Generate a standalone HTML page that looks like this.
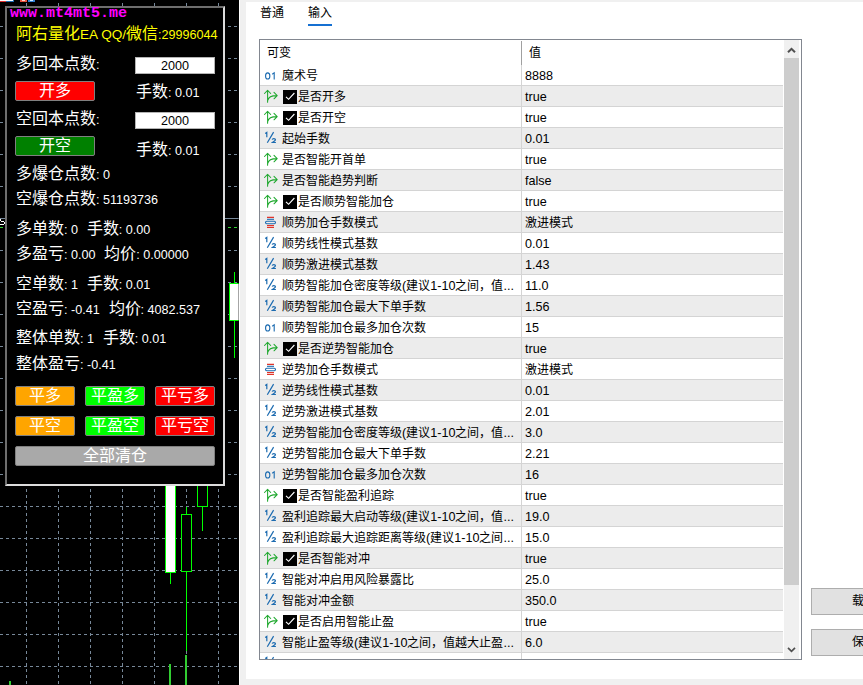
<!DOCTYPE html>
<html lang="zh-CN"><head><meta charset="utf-8"><title>EA</title>
<style>
html,body{margin:0;padding:0}
body{width:863px;height:685px;overflow:hidden;position:relative;background:#fff;font-family:"Liberation Sans",sans-serif;font-size:12px;color:#000}
.chart{position:absolute;left:0;top:0}
.gut{position:absolute;left:240px;top:0;width:6px;height:685px;background:#f0f0f0}
.foot{position:absolute;left:240px;top:679px;width:623px;height:6px;background:#f0f0f0}
.topl{position:absolute;left:240px;top:0;width:623px;height:2px;background:#f0f0f0}
.panel{position:absolute;left:5px;top:6px;width:216px;height:476px;background:#000;border:2px solid;border-color:#6e6e6e #dcdcdc #dcdcdc #6e6e6e}
.pw{position:absolute;left:0;top:0;width:239px;height:685px}
.url{position:absolute;left:10px;top:4px;font-family:"Liberation Mono",monospace;font-weight:bold;font-size:15px;color:#ff00ff;line-height:20px;white-space:pre}
.lb{position:absolute;font-weight:200;font-size:16px;line-height:20px;height:20px;white-space:pre}
.lb i{font-style:normal;font-size:12.6px}
.lb b{display:inline-block;width:1.8px}
.ed{position:absolute;left:135px;width:78px;height:15px;background:#fff;border:1px solid #b4b4b4;font-size:12.6px;line-height:16px;text-align:center;color:#000}
.bt{position:absolute;border-radius:2px;font-weight:200;box-sizing:border-box;border:1px solid #808080;color:#fff;font-size:16px;line-height:17px;text-align:center;white-space:nowrap}
.tab{position:absolute;top:4px;font-size:12px;line-height:18px}
.ul{position:absolute;left:308px;top:23.5px;width:24px;height:2px;background:#1570d2}
.tbl{position:absolute;left:259px;top:39px;width:541px;height:619px;border:1px solid #828790;background:#fff;overflow:hidden}
.hd{position:absolute;left:0;top:0;width:524px;height:25px;line-height:26px}
.hs{position:absolute;left:261px;top:1px;width:1px;height:24px;background:#a0a0a0}
.row{position:absolute;left:0;width:523px;height:20px;border-bottom:1px solid #d4d4d4;line-height:20px;white-space:nowrap}
.row.alt{background:#ececec}
.ic{position:absolute;left:0;top:0;width:16px;height:21px;overflow:visible}
.cb{position:absolute;left:23px;top:4px;width:14px;height:14px}
.nm{position:absolute;left:22px;top:1px;line-height:21px}
.nm i,.vl i{font-style:normal;font-size:12.6px}
.nm.ck{left:37.5px}
.vl{position:absolute;left:265px;top:1px;line-height:21px}
.cs{position:absolute;left:261px;top:1px;width:1px;height:620px;background:#d4d4d4}
.sb{position:absolute;left:524px;top:0;width:17px;height:619px;background:#fff}
.sbt{position:absolute;left:0;top:0;width:15px;height:619px;background:#f0f0f0}
.sbth{position:absolute;left:0;top:18px;width:15px;height:527px;background:#cdcdcd}
.pb{position:absolute;left:811px;width:110px;height:27px;box-sizing:border-box;background:#e1e1e1;border:1px solid #adadad;line-height:25px;padding-left:40px}
</style></head><body>
<svg class="chart" width="239" height="685" viewBox="0 0 239 685" shape-rendering="crispEdges">
<rect width="239" height="685" fill="#000"/>
<g stroke="#778899" stroke-width="1" stroke-dasharray="3 3"><line x1="26.5" y1="3" x2="26.5" y2="685"/><line x1="58.5" y1="3" x2="58.5" y2="685"/><line x1="90.5" y1="3" x2="90.5" y2="685"/><line x1="122.5" y1="3" x2="122.5" y2="685"/><line x1="154.5" y1="3" x2="154.5" y2="685"/><line x1="186.5" y1="3" x2="186.5" y2="685"/><line x1="218.5" y1="3" x2="218.5" y2="685"/></g>
<g stroke="#778899" stroke-width="1" stroke-dasharray="3 3"><line x1="0" y1="26.5" x2="239" y2="26.5"/><line x1="0" y1="58.5" x2="239" y2="58.5"/><line x1="0" y1="90.5" x2="239" y2="90.5"/><line x1="0" y1="122.5" x2="239" y2="122.5"/><line x1="0" y1="154.5" x2="239" y2="154.5"/><line x1="0" y1="186.5" x2="239" y2="186.5"/><line x1="0" y1="250.5" x2="239" y2="250.5"/><line x1="0" y1="282.5" x2="239" y2="282.5"/><line x1="0" y1="314.5" x2="239" y2="314.5"/><line x1="0" y1="346.5" x2="239" y2="346.5"/><line x1="0" y1="378.5" x2="239" y2="378.5"/><line x1="0" y1="410.5" x2="239" y2="410.5"/><line x1="0" y1="442.5" x2="239" y2="442.5"/><line x1="0" y1="474.5" x2="239" y2="474.5"/><line x1="0" y1="506.5" x2="239" y2="506.5"/><line x1="0" y1="538.5" x2="239" y2="538.5"/><line x1="0" y1="570.5" x2="239" y2="570.5"/><line x1="0" y1="602.5" x2="239" y2="602.5"/><line x1="0" y1="634.5" x2="239" y2="634.5"/><line x1="0" y1="666.5" x2="239" y2="666.5"/></g>
<line x1="0" y1="218.5" x2="239" y2="218.5" stroke="#778899"/>
<line x1="0" y1="227.5" x2="239" y2="227.5" stroke="#32cd32" stroke-dasharray="3 3"/>
<g fill="#fff"><rect x="0" y="219" width="1" height="2"/><rect x="1" y="221" width="3" height="1"/><rect x="4" y="222" width="1" height="2"/><rect x="0" y="224" width="4" height="1"/></g>
<g stroke="#00ff00" stroke-width="1" fill="none">
<line x1="170.5" y1="400" x2="170.5" y2="584"/>
<rect x="165.5" y="400" width="10" height="172" fill="#fff"/>
<line x1="186.5" y1="507" x2="186.5" y2="651"/>
<rect x="181.5" y="514.5" width="10" height="57" fill="#000"/>
<line x1="202.5" y1="400" x2="202.5" y2="531"/>
<rect x="197.5" y="400" width="10" height="106.5" fill="#000"/>
<line x1="234.5" y1="272" x2="234.5" y2="358"/>
<rect x="229.5" y="283.5" width="10" height="37" fill="#fff"/>
</g>
<g fill="#32cd32"><rect x="9" y="681" width="2" height="4"/><rect x="169" y="664" width="2" height="21"/><rect x="185" y="655" width="2" height="30"/></g>
<rect x="238" y="0" width="1" height="685" fill="#000" fill-opacity="0.35"/>
<rect x="0" y="0" width="13" height="1" fill="#fff"/><rect x="13" y="0" width="1" height="2" fill="#1c6bb0"/><rect x="0" y="1" width="6" height="1" fill="#e03030"/><rect x="6" y="1" width="8" height="1" fill="#1c6bb0"/>
<rect x="20" y="0" width="7" height="2" fill="#e8503c"/><rect x="22" y="0" width="3" height="1" fill="#ffd8d0"/><rect x="28" y="0" width="7" height="2" fill="#2f7fd0"/><rect x="30" y="0" width="3" height="1" fill="#d0e8ff"/>
</svg>
<div class="gut"></div>
<div class="foot"></div>
<div class="topl"></div>
<div class="pw">
<div class="panel"></div>
<div class="url">www.mt4mt5.me</div>
<div class="lb" style="left:16px;top:24.2px;color:#ffff00">阿右量化<i style="font-size:13.6px">EA QQ/</i>微信<i>:29996044</i></div>
<div class="lb" style="left:16px;top:53.7px;color:#fff">多回本点数<i>:</i></div>
<div class="lb" style="left:136px;top:82.0px;color:#fff">手数<i>: 0.01</i></div>
<div class="lb" style="left:16px;top:108.5px;color:#fff">空回本点数<i>:</i></div>
<div class="lb" style="left:136px;top:139.6px;color:#fff">手数<i>: 0.01</i></div>
<div class="lb" style="left:16px;top:163.7px;color:#fff">多爆仓点数<i>: 0</i></div>
<div class="lb" style="left:16px;top:188.9px;color:#fff">空爆仓点数<i>: 51193736</i></div>
<div class="lb" style="left:16px;top:218.7px;color:#fff">多单数<i>: 0 <b></b> </i>手数<i>: 0.00</i></div>
<div class="lb" style="left:16px;top:244.3px;color:#fff">多盈亏<i>: 0.00 <b></b> </i>均价<i>: 0.00000</i></div>
<div class="lb" style="left:16px;top:273.9px;color:#fff">空单数<i>: 1 <b></b> </i>手数<i>: 0.01</i></div>
<div class="lb" style="left:16px;top:298.8px;color:#fff">空盈亏<i>: -0.41 <b></b> </i>均价<i>: 4082.537</i></div>
<div class="lb" style="left:16px;top:328.4px;color:#fff">整体单数<i>: 1 <b></b> </i>手数<i>: 0.01</i></div>
<div class="lb" style="left:16px;top:353.6px;color:#fff">整体盈亏<i>: -0.41</i></div>
<div class="ed" style="top:57px">2000</div>
<div class="ed" style="top:112px">2000</div>
<div class="bt" style="left:15px;top:81px;width:80px;height:20px;background:#ff0000">开多</div>
<div class="bt" style="left:15px;top:136px;width:80px;height:20px;background:#008000">开空</div>
<div class="bt" style="left:15px;top:386px;width:60px;height:20px;background:#ffa500">平多</div>
<div class="bt" style="left:85px;top:386px;width:60px;height:20px;background:#00ff00">平盈多</div>
<div class="bt" style="left:155px;top:386px;width:60px;height:20px;background:#ff0000">平亏多</div>
<div class="bt" style="left:15px;top:416px;width:60px;height:20px;background:#ffa500">平空</div>
<div class="bt" style="left:85px;top:416px;width:60px;height:20px;background:#00ff00">平盈空</div>
<div class="bt" style="left:155px;top:416px;width:60px;height:20px;background:#ff0000">平亏空</div>
<div class="bt" style="left:15px;top:446px;width:200px;height:20px;background:#a9a9a9">全部清仓</div>
</div>
<div class="tab" style="left:260px">普通</div>
<div class="tab" style="left:308px">输入</div>
<div class="ul"></div>
<div class="tbl">
<div class="hd"><span style="position:absolute;left:6.5px">可变</span><span style="position:absolute;left:268.5px">值</span></div>
<div class="row" style="top:25.0px"><svg class="ic" viewBox="0 0 16 21"><ellipse cx="7.7" cy="10.9" rx="2.15" ry="3.05" fill="none" stroke="#1c6bb0" stroke-width="1.1"/><path d="M12.2 9.2 L14.2 7.8 V14.4" fill="none" stroke="#1c6bb0" stroke-width="1.1"/></svg><span class="nm">魔术号</span><span class="vl"><i>8888</i></span></div>
<div class="row alt" style="top:46.0px"><svg class="ic" viewBox="0 0 16 21"><path d="M7.6 16.3 V4.7 M4.5 7.5 L7.6 4.4 L10.7 7.5 M7.8 14.4 C8.3 11.4 11 9.6 16.8 9.6 M14 6.4 L17.2 9.6 L14 12.8" fill="none" stroke="#1fa82e" stroke-width="1.05" stroke-linecap="round" stroke-linejoin="round"/></svg><svg class="cb" viewBox="0 0 14 14"><rect width="14" height="14" fill="#000"/><path d="M3 6.8 L5.6 9.3 L11.4 3" fill="none" stroke="#fff" stroke-width="1.15"/></svg><span class="nm ck">是否开多</span><span class="vl"><i>true</i></span></div>
<div class="row" style="top:67.0px"><svg class="ic" viewBox="0 0 16 21"><path d="M7.6 16.3 V4.7 M4.5 7.5 L7.6 4.4 L10.7 7.5 M7.8 14.4 C8.3 11.4 11 9.6 16.8 9.6 M14 6.4 L17.2 9.6 L14 12.8" fill="none" stroke="#1fa82e" stroke-width="1.05" stroke-linecap="round" stroke-linejoin="round"/></svg><svg class="cb" viewBox="0 0 14 14"><rect width="14" height="14" fill="#000"/><path d="M3 6.8 L5.6 9.3 L11.4 3" fill="none" stroke="#fff" stroke-width="1.15"/></svg><span class="nm ck">是否开空</span><span class="vl"><i>true</i></span></div>
<div class="row alt" style="top:88.0px"><svg class="ic" viewBox="0 0 16 21"><path d="M5.2 5.5 L6.8 4.4 V9.2 M7.3 14.8 L13.6 4.1 M12.2 11.7 C12.5 10.3 15.5 10.3 15.4 11.9 C15.3 13 13.2 13.5 12.3 14.5 H15.9" fill="none" stroke="#1c6bb0" stroke-width="1.2"/></svg><span class="nm">起始手数</span><span class="vl"><i>0.01</i></span></div>
<div class="row" style="top:109.0px"><svg class="ic" viewBox="0 0 16 21"><path d="M7.6 16.3 V4.7 M4.5 7.5 L7.6 4.4 L10.7 7.5 M7.8 14.4 C8.3 11.4 11 9.6 16.8 9.6 M14 6.4 L17.2 9.6 L14 12.8" fill="none" stroke="#1fa82e" stroke-width="1.05" stroke-linecap="round" stroke-linejoin="round"/></svg><span class="nm">是否智能开首单</span><span class="vl"><i>true</i></span></div>
<div class="row alt" style="top:130.0px"><svg class="ic" viewBox="0 0 16 21"><path d="M7.6 16.3 V4.7 M4.5 7.5 L7.6 4.4 L10.7 7.5 M7.8 14.4 C8.3 11.4 11 9.6 16.8 9.6 M14 6.4 L17.2 9.6 L14 12.8" fill="none" stroke="#1fa82e" stroke-width="1.05" stroke-linecap="round" stroke-linejoin="round"/></svg><span class="nm">是否智能趋势判断</span><span class="vl"><i>false</i></span></div>
<div class="row" style="top:151.0px"><svg class="ic" viewBox="0 0 16 21"><path d="M7.6 16.3 V4.7 M4.5 7.5 L7.6 4.4 L10.7 7.5 M7.8 14.4 C8.3 11.4 11 9.6 16.8 9.6 M14 6.4 L17.2 9.6 L14 12.8" fill="none" stroke="#1fa82e" stroke-width="1.05" stroke-linecap="round" stroke-linejoin="round"/></svg><svg class="cb" viewBox="0 0 14 14"><rect width="14" height="14" fill="#000"/><path d="M3 6.8 L5.6 9.3 L11.4 3" fill="none" stroke="#fff" stroke-width="1.15"/></svg><span class="nm ck">是否顺势智能加仓</span><span class="vl"><i>true</i></span></div>
<div class="row alt" style="top:172.0px"><svg class="ic" viewBox="0 0 16 21"><path d="M7 5.4 H14 M7 13.6 H14 M7 15.5 H14" stroke="#e0352b" stroke-width="1.1" fill="none"/><path d="M7 7.3 H14" stroke="#1c6bb0" stroke-width="1.1" fill="none"/><rect x="5.5" y="9.2" width="10" height="2.5" rx="1.25" fill="none" stroke="#1c6bb0" stroke-width="1.1"/></svg><span class="nm">顺势加仓手数模式</span><span class="vl">激进模式</span></div>
<div class="row" style="top:193.0px"><svg class="ic" viewBox="0 0 16 21"><path d="M5.2 5.5 L6.8 4.4 V9.2 M7.3 14.8 L13.6 4.1 M12.2 11.7 C12.5 10.3 15.5 10.3 15.4 11.9 C15.3 13 13.2 13.5 12.3 14.5 H15.9" fill="none" stroke="#1c6bb0" stroke-width="1.2"/></svg><span class="nm">顺势线性模式基数</span><span class="vl"><i>0.01</i></span></div>
<div class="row alt" style="top:214.0px"><svg class="ic" viewBox="0 0 16 21"><path d="M5.2 5.5 L6.8 4.4 V9.2 M7.3 14.8 L13.6 4.1 M12.2 11.7 C12.5 10.3 15.5 10.3 15.4 11.9 C15.3 13 13.2 13.5 12.3 14.5 H15.9" fill="none" stroke="#1c6bb0" stroke-width="1.2"/></svg><span class="nm">顺势激进模式基数</span><span class="vl"><i>1.43</i></span></div>
<div class="row" style="top:235.0px"><svg class="ic" viewBox="0 0 16 21"><path d="M5.2 5.5 L6.8 4.4 V9.2 M7.3 14.8 L13.6 4.1 M12.2 11.7 C12.5 10.3 15.5 10.3 15.4 11.9 C15.3 13 13.2 13.5 12.3 14.5 H15.9" fill="none" stroke="#1c6bb0" stroke-width="1.2"/></svg><span class="nm">顺势智能加仓密度等级<i>(</i>建议<i>1-10</i>之间，值<i>...</i></span><span class="vl"><i>11.0</i></span></div>
<div class="row alt" style="top:256.0px"><svg class="ic" viewBox="0 0 16 21"><path d="M5.2 5.5 L6.8 4.4 V9.2 M7.3 14.8 L13.6 4.1 M12.2 11.7 C12.5 10.3 15.5 10.3 15.4 11.9 C15.3 13 13.2 13.5 12.3 14.5 H15.9" fill="none" stroke="#1c6bb0" stroke-width="1.2"/></svg><span class="nm">顺势智能加仓最大下单手数</span><span class="vl"><i>1.56</i></span></div>
<div class="row" style="top:277.0px"><svg class="ic" viewBox="0 0 16 21"><ellipse cx="7.7" cy="10.9" rx="2.15" ry="3.05" fill="none" stroke="#1c6bb0" stroke-width="1.1"/><path d="M12.2 9.2 L14.2 7.8 V14.4" fill="none" stroke="#1c6bb0" stroke-width="1.1"/></svg><span class="nm">顺势智能加仓最多加仓次数</span><span class="vl"><i>15</i></span></div>
<div class="row alt" style="top:298.0px"><svg class="ic" viewBox="0 0 16 21"><path d="M7.6 16.3 V4.7 M4.5 7.5 L7.6 4.4 L10.7 7.5 M7.8 14.4 C8.3 11.4 11 9.6 16.8 9.6 M14 6.4 L17.2 9.6 L14 12.8" fill="none" stroke="#1fa82e" stroke-width="1.05" stroke-linecap="round" stroke-linejoin="round"/></svg><svg class="cb" viewBox="0 0 14 14"><rect width="14" height="14" fill="#000"/><path d="M3 6.8 L5.6 9.3 L11.4 3" fill="none" stroke="#fff" stroke-width="1.15"/></svg><span class="nm ck">是否逆势智能加仓</span><span class="vl"><i>true</i></span></div>
<div class="row" style="top:319.0px"><svg class="ic" viewBox="0 0 16 21"><path d="M7 5.4 H14 M7 13.6 H14 M7 15.5 H14" stroke="#e0352b" stroke-width="1.1" fill="none"/><path d="M7 7.3 H14" stroke="#1c6bb0" stroke-width="1.1" fill="none"/><rect x="5.5" y="9.2" width="10" height="2.5" rx="1.25" fill="none" stroke="#1c6bb0" stroke-width="1.1"/></svg><span class="nm">逆势加仓手数模式</span><span class="vl">激进模式</span></div>
<div class="row alt" style="top:340.0px"><svg class="ic" viewBox="0 0 16 21"><path d="M5.2 5.5 L6.8 4.4 V9.2 M7.3 14.8 L13.6 4.1 M12.2 11.7 C12.5 10.3 15.5 10.3 15.4 11.9 C15.3 13 13.2 13.5 12.3 14.5 H15.9" fill="none" stroke="#1c6bb0" stroke-width="1.2"/></svg><span class="nm">逆势线性模式基数</span><span class="vl"><i>0.01</i></span></div>
<div class="row" style="top:361.0px"><svg class="ic" viewBox="0 0 16 21"><path d="M5.2 5.5 L6.8 4.4 V9.2 M7.3 14.8 L13.6 4.1 M12.2 11.7 C12.5 10.3 15.5 10.3 15.4 11.9 C15.3 13 13.2 13.5 12.3 14.5 H15.9" fill="none" stroke="#1c6bb0" stroke-width="1.2"/></svg><span class="nm">逆势激进模式基数</span><span class="vl"><i>2.01</i></span></div>
<div class="row alt" style="top:382.0px"><svg class="ic" viewBox="0 0 16 21"><path d="M5.2 5.5 L6.8 4.4 V9.2 M7.3 14.8 L13.6 4.1 M12.2 11.7 C12.5 10.3 15.5 10.3 15.4 11.9 C15.3 13 13.2 13.5 12.3 14.5 H15.9" fill="none" stroke="#1c6bb0" stroke-width="1.2"/></svg><span class="nm">逆势智能加仓密度等级<i>(</i>建议<i>1-10</i>之间，值<i>...</i></span><span class="vl"><i>3.0</i></span></div>
<div class="row" style="top:403.0px"><svg class="ic" viewBox="0 0 16 21"><path d="M5.2 5.5 L6.8 4.4 V9.2 M7.3 14.8 L13.6 4.1 M12.2 11.7 C12.5 10.3 15.5 10.3 15.4 11.9 C15.3 13 13.2 13.5 12.3 14.5 H15.9" fill="none" stroke="#1c6bb0" stroke-width="1.2"/></svg><span class="nm">逆势智能加仓最大下单手数</span><span class="vl"><i>2.21</i></span></div>
<div class="row alt" style="top:424.0px"><svg class="ic" viewBox="0 0 16 21"><ellipse cx="7.7" cy="10.9" rx="2.15" ry="3.05" fill="none" stroke="#1c6bb0" stroke-width="1.1"/><path d="M12.2 9.2 L14.2 7.8 V14.4" fill="none" stroke="#1c6bb0" stroke-width="1.1"/></svg><span class="nm">逆势智能加仓最多加仓次数</span><span class="vl"><i>16</i></span></div>
<div class="row" style="top:445.0px"><svg class="ic" viewBox="0 0 16 21"><path d="M7.6 16.3 V4.7 M4.5 7.5 L7.6 4.4 L10.7 7.5 M7.8 14.4 C8.3 11.4 11 9.6 16.8 9.6 M14 6.4 L17.2 9.6 L14 12.8" fill="none" stroke="#1fa82e" stroke-width="1.05" stroke-linecap="round" stroke-linejoin="round"/></svg><svg class="cb" viewBox="0 0 14 14"><rect width="14" height="14" fill="#000"/><path d="M3 6.8 L5.6 9.3 L11.4 3" fill="none" stroke="#fff" stroke-width="1.15"/></svg><span class="nm ck">是否智能盈利追踪</span><span class="vl"><i>true</i></span></div>
<div class="row alt" style="top:466.0px"><svg class="ic" viewBox="0 0 16 21"><path d="M5.2 5.5 L6.8 4.4 V9.2 M7.3 14.8 L13.6 4.1 M12.2 11.7 C12.5 10.3 15.5 10.3 15.4 11.9 C15.3 13 13.2 13.5 12.3 14.5 H15.9" fill="none" stroke="#1c6bb0" stroke-width="1.2"/></svg><span class="nm">盈利追踪最大启动等级<i>(</i>建议<i>1-10</i>之间，值<i>...</i></span><span class="vl"><i>19.0</i></span></div>
<div class="row" style="top:487.0px"><svg class="ic" viewBox="0 0 16 21"><path d="M5.2 5.5 L6.8 4.4 V9.2 M7.3 14.8 L13.6 4.1 M12.2 11.7 C12.5 10.3 15.5 10.3 15.4 11.9 C15.3 13 13.2 13.5 12.3 14.5 H15.9" fill="none" stroke="#1c6bb0" stroke-width="1.2"/></svg><span class="nm">盈利追踪最大追踪距离等级<i>(</i>建议<i>1-10</i>之间<i>...</i></span><span class="vl"><i>15.0</i></span></div>
<div class="row alt" style="top:508.0px"><svg class="ic" viewBox="0 0 16 21"><path d="M7.6 16.3 V4.7 M4.5 7.5 L7.6 4.4 L10.7 7.5 M7.8 14.4 C8.3 11.4 11 9.6 16.8 9.6 M14 6.4 L17.2 9.6 L14 12.8" fill="none" stroke="#1fa82e" stroke-width="1.05" stroke-linecap="round" stroke-linejoin="round"/></svg><svg class="cb" viewBox="0 0 14 14"><rect width="14" height="14" fill="#000"/><path d="M3 6.8 L5.6 9.3 L11.4 3" fill="none" stroke="#fff" stroke-width="1.15"/></svg><span class="nm ck">是否智能对冲</span><span class="vl"><i>true</i></span></div>
<div class="row" style="top:529.0px"><svg class="ic" viewBox="0 0 16 21"><path d="M5.2 5.5 L6.8 4.4 V9.2 M7.3 14.8 L13.6 4.1 M12.2 11.7 C12.5 10.3 15.5 10.3 15.4 11.9 C15.3 13 13.2 13.5 12.3 14.5 H15.9" fill="none" stroke="#1c6bb0" stroke-width="1.2"/></svg><span class="nm">智能对冲启用风险暴露比</span><span class="vl"><i>25.0</i></span></div>
<div class="row alt" style="top:550.0px"><svg class="ic" viewBox="0 0 16 21"><path d="M5.2 5.5 L6.8 4.4 V9.2 M7.3 14.8 L13.6 4.1 M12.2 11.7 C12.5 10.3 15.5 10.3 15.4 11.9 C15.3 13 13.2 13.5 12.3 14.5 H15.9" fill="none" stroke="#1c6bb0" stroke-width="1.2"/></svg><span class="nm">智能对冲金额</span><span class="vl"><i>350.0</i></span></div>
<div class="row" style="top:571.0px"><svg class="ic" viewBox="0 0 16 21"><path d="M7.6 16.3 V4.7 M4.5 7.5 L7.6 4.4 L10.7 7.5 M7.8 14.4 C8.3 11.4 11 9.6 16.8 9.6 M14 6.4 L17.2 9.6 L14 12.8" fill="none" stroke="#1fa82e" stroke-width="1.05" stroke-linecap="round" stroke-linejoin="round"/></svg><svg class="cb" viewBox="0 0 14 14"><rect width="14" height="14" fill="#000"/><path d="M3 6.8 L5.6 9.3 L11.4 3" fill="none" stroke="#fff" stroke-width="1.15"/></svg><span class="nm ck">是否启用智能止盈</span><span class="vl"><i>true</i></span></div>
<div class="row alt" style="top:592.0px"><svg class="ic" viewBox="0 0 16 21"><path d="M5.2 5.5 L6.8 4.4 V9.2 M7.3 14.8 L13.6 4.1 M12.2 11.7 C12.5 10.3 15.5 10.3 15.4 11.9 C15.3 13 13.2 13.5 12.3 14.5 H15.9" fill="none" stroke="#1c6bb0" stroke-width="1.2"/></svg><span class="nm">智能止盈等级<i>(</i>建议<i>1-10</i>之间，值越大止盈<i>...</i></span><span class="vl"><i>6.0</i></span></div>
<div class="row" style="top:613.0px"><svg class="ic" viewBox="0 0 16 21"><path d="M5.2 5.5 L6.8 4.4 V9.2 M7.3 14.8 L13.6 4.1 M12.2 11.7 C12.5 10.3 15.5 10.3 15.4 11.9 C15.3 13 13.2 13.5 12.3 14.5 H15.9" fill="none" stroke="#1c6bb0" stroke-width="1.2"/></svg><span class="nm"></span><span class="vl"></span></div>
<div class="cs"></div><div class="hs"></div>
<div class="sb"><div class="sbt"></div><div class="sbth"></div>
<svg style="position:absolute;left:0;top:0" width="15" height="619" viewBox="0 0 15 619"><path d="M4 12.3 L7.5 8.8 L11 12.3" fill="none" stroke="#505050" stroke-width="2"/><path d="M4 607.8 L7.5 611.3 L11 607.8" fill="none" stroke="#505050" stroke-width="1.7"/></svg>
</div>
</div>
<div class="pb" style="top:588px">载入</div>
<div class="pb" style="top:629px">保存</div>
</body></html>
